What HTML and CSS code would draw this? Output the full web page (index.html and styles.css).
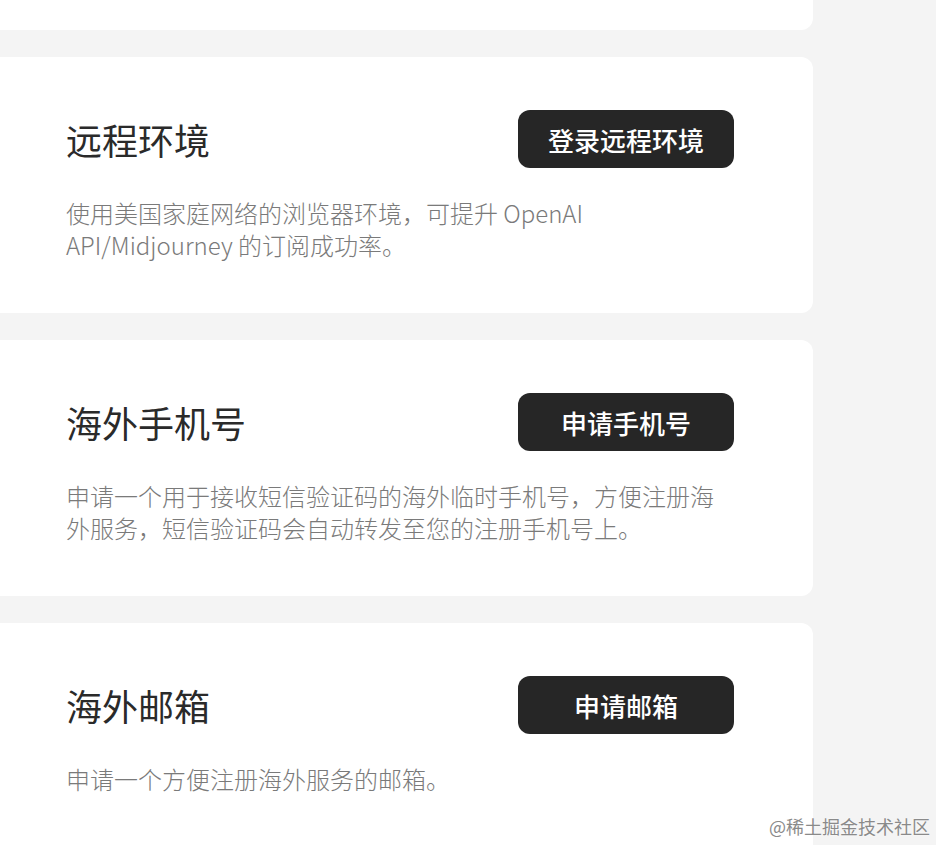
FILE: index.html
```html
<!DOCTYPE html>
<html lang="zh-CN">
<head>
    <meta charset="UTF-8">
    <meta name="viewport" content="width=device-width, initial-scale=1.0">
    <title>海外服务</title>
    <link rel="stylesheet" href="styles.css">
</head>
<body>
    <div class="service-list">
        <div class="service-card"></div>
        <div class="service-card">
            <div class="card-head">
                <h2 class="card-title">远程环境</h2>
                <button class="dark-button">登录远程环境</button>
            </div>
            <p class="card-desc">使用美国家庭网络的浏览器环境，可提升 OpenAI API/Midjourney 的订阅成功率。</p>
        </div>
        <div class="service-card">
            <div class="card-head">
                <h2 class="card-title">海外手机号</h2>
                <button class="dark-button">申请手机号</button>
            </div>
            <p class="card-desc">申请一个用于接收短信验证码的海外临时手机号，方便注册海外服务，短信验证码会自动转发至您的注册手机号上。</p>
        </div>
        <div class="service-card">
            <div class="card-head">
                <h2 class="card-title">海外邮箱</h2>
                <button class="dark-button">申请邮箱</button>
            </div>
            <p class="card-desc">申请一个方便注册海外服务的邮箱。</p>
        </div>
    </div>
    <div class="watermark">@稀土掘金技术社区</div>
</body>
</html>
```

FILE: styles.css
```css
:root {
    --page-bg: #f4f4f4; --card-bg: #ffffff;
    --title-color: #2a2a2a; --desc-color: #7a7a7a;
    --button-bg: #262626; --button-text: #ffffff;
}
body { margin: 0; background-color: var(--page-bg); font-family: "Noto Sans CJK SC", "Noto Sans", sans-serif; overflow: hidden; height: 845px; }
.service-list { width: 813px; margin-top: -226px; display: flex; flex-direction: column; gap: 27px; }
.service-card { background: var(--card-bg); border-radius: 0 12px 12px 0; height: 256px; box-sizing: border-box; padding: 53px 79px 0 66px; }
.card-head { display: flex; align-items: center; justify-content: space-between; height: 58px; }
.card-title { margin: 0; font-size: 36px; font-weight: 400; color: var(--title-color); line-height: 1; }
.dark-button { width: 216px; height: 58px; border: none; border-radius: 12px; background-color: var(--button-bg); color: var(--button-text); font-family: inherit; font-size: 26px; font-weight: 500; cursor: pointer; }
.card-desc { margin: 29px 0 0; font-size: 24px; line-height: 32px; color: var(--desc-color); font-weight: 300; }
.watermark { position: absolute; right: 6px; bottom: 6px; font-size: 18px; color: #8a8a8a; text-shadow: 0 0 2px #ffffff; }
```
